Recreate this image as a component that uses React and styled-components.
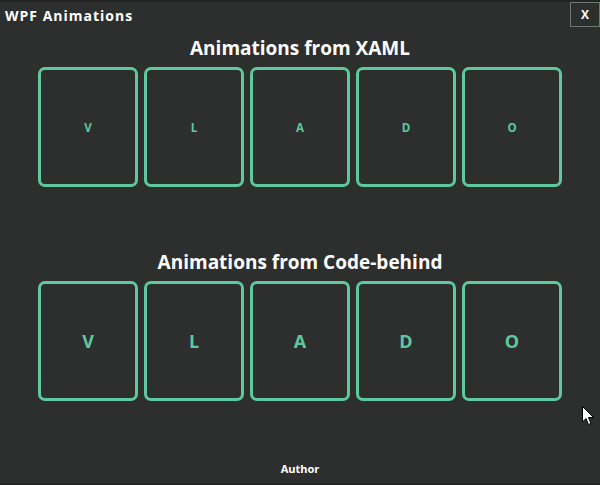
import React from 'react';
import styled, { createGlobalStyle } from 'styled-components';

const GlobalStyle = createGlobalStyle`
  html, body {
    margin: 0;
    padding: 0;
    background: #2d2f2e;
  }
  body {
    font-family: "Open Sans", "Noto Sans", sans-serif;
  }
`;

const Window = styled.div`
  position: relative;
  width: 600px;
  height: 485px;
  box-sizing: border-box;
  background: #2d2f2e;
  border-top: 2px solid #232524;
  border-bottom: 2px solid #232524;
  display: flex;
  flex-direction: column;
  overflow: hidden;
`;

const TitleBar = styled.div`
  display: flex;
  justify-content: space-between;
  align-items: flex-start;
  height: 26px;
  padding-left: 5px;
`;

const Title = styled.div`
  color: #ffffff;
  font-weight: 700;
  font-size: 14px;
  letter-spacing: 1px;
  line-height: 28px;
`;

const CloseButton = styled.button`
  width: 30px;
  height: 25px;
  box-sizing: border-box;
  margin: 0;
  padding: 0;
  background: transparent;
  border: 1px solid #6c7a74;
  color: #ffffff;
  font-family: inherit;
  font-weight: 700;
  font-size: 12px;
  cursor: pointer;
`;

const Section = styled.section`
  display: flex;
  flex-direction: column;
  align-items: center;
  margin-top: ${p => p.$top}px;
`;

const Heading = styled.h2`
  margin: 0;
  color: #ffffff;
  font-size: 19px;
  font-weight: 700;
  line-height: 25px;
`;

const Row = styled.div`
  display: flex;
  gap: 6px;
  margin-top: 6px;
`;

const LetterBox = styled.div`
  width: 100px;
  height: 120px;
  box-sizing: border-box;
  border: 3px solid #5ec9a1;
  border-radius: 7px;
  display: flex;
  align-items: center;
  justify-content: center;
  color: #5ec9a1;
  font-weight: 700;
  font-size: ${p => (p.$big ? 18 : 11.5)}px;
`;

const Footer = styled.div`
  margin-top: auto;
  padding-bottom: 7px;
  text-align: center;
  color: #ffffff;
  font-weight: 700;
  font-size: 11px;
`;

const Cursor = styled.svg`
  position: absolute;
  left: 582px;
  top: 404px;
`;

const letters = ['V', 'L', 'A', 'D', 'O'];

export default function App() {
  return (
    <>
      <GlobalStyle />
      <Window>
        <TitleBar>
          <Title>WPF Animations</Title>
          <CloseButton>X</CloseButton>
        </TitleBar>

        <Section $top={8}>
          <Heading>Animations from XAML</Heading>
          <Row>
            {letters.map(l => (
              <LetterBox key={l}>{l}</LetterBox>
            ))}
          </Row>
        </Section>

        <Section $top={63}>
          <Heading>Animations from Code-behind</Heading>
          <Row>
            {letters.map(l => (
              <LetterBox key={l} $big>{l}</LetterBox>
            ))}
          </Row>
        </Section>

        <Footer>Author</Footer>

        <Cursor width="13" height="20" viewBox="0 0 13 20">
          <path
            d="M0.5 0.5 L0.5 16 L4 12.5 L6.5 18.5 L9 17.5 L6.5 11.5 L11.5 11.5 Z"
            fill="#ffffff"
            stroke="#000000"
            strokeWidth="1"
            strokeLinejoin="round"
          />
        </Cursor>
      </Window>
    </>
  );
}
